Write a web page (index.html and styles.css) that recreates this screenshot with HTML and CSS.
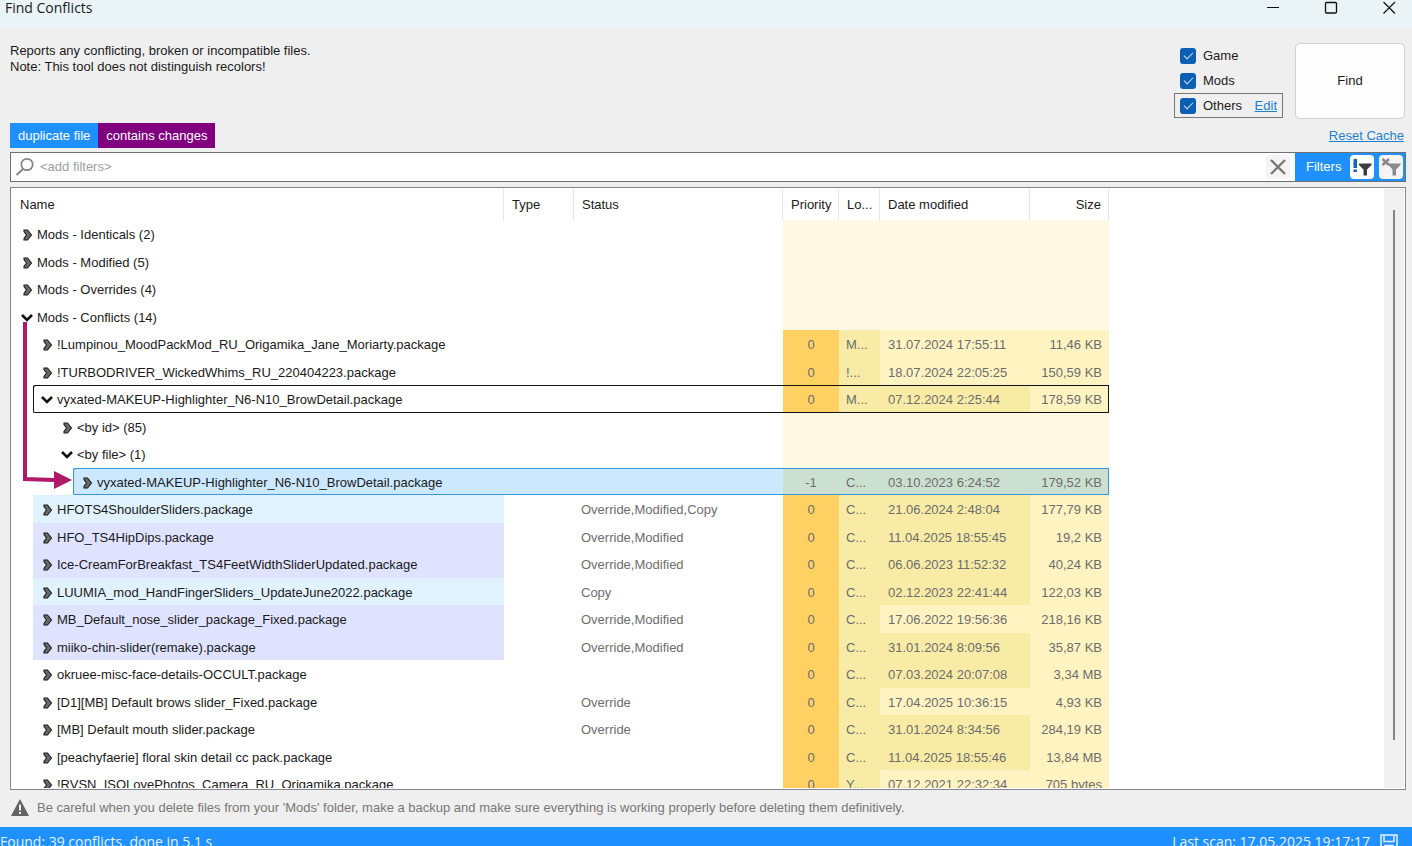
FILE: index.html
```html
<!DOCTYPE html>
<html lang="en">
<head>
<meta charset="utf-8">
<title>Find Conflicts</title>
<link rel="stylesheet" href="styles.css">
</head>
<body>
<svg class="sprite" aria-hidden="true">
  <symbol id="closed" viewBox="0 0 12 12"><path d="M3 1H6.500L10.500 6L6.500 11H3V9.500L5.500 6L3 2.500Z" fill="#6a6a6a" stroke="#1c1c1c" stroke-width="1.100"/></symbol>
  <symbol id="open" viewBox="0 0 12 12"><path d="M1 3L6 8L11 3" fill="none" stroke="#111" stroke-width="2.600"/></symbol>
</svg>
<header class="titlebar">
  <h1 class="title">Find Conflicts</h1>
  <div class="window-buttons">
    <button class="window-button" aria-label="Minimize"><svg width="14" height="14" viewBox="0 0 14 14"><path d="M1 6.500H13" stroke="#111"/></svg></button>
    <button class="window-button" aria-label="Maximize"><svg width="14" height="14" viewBox="0 0 14 14"><rect x="1.500" y="1.500" width="11" height="10.500" rx="1" fill="none" stroke="#111" stroke-width="1.300"/></svg></button>
    <button class="window-button" aria-label="Close"><svg width="14" height="14" viewBox="0 0 14 14"><path d="M1.500 1L13 12.500M13 1L1.500 12.500" stroke="#111" stroke-width="1.200"/></svg></button>
  </div>
</header>
<main class="content">
  <section class="top">
    <p class="intro">Reports any conflicting, broken or incompatible files.<br>Note: This tool does not distinguish recolors!</p>
    <div class="scopes">
      <div class="scope"><label class="scope-label"><input class="check" type="checkbox" checked>Game</label></div>
      <div class="scope"><label class="scope-label"><input class="check" type="checkbox" checked>Mods</label></div>
      <div class="scope scope-framed"><label class="scope-label"><input class="check" type="checkbox" checked>Others</label><a class="link" href="#">Edit</a></div>
    </div>
    <button class="find">Find</button>
  </section>
  <section class="tags">
    <span class="tag tag-blue">duplicate file</span><span class="tag tag-purple">contains changes</span>
    <a class="link reset" href="#">Reset Cache</a>
  </section>
  <section class="filter">
    <svg class="search-icon" width="20" height="20" viewBox="0 0 20 20"><circle cx="12" cy="7.500" r="5.700" fill="none" stroke="#858585" stroke-width="1.700"/><path d="M8 12L1.500 18" stroke="#858585" stroke-width="2"/></svg>
    <input class="filter-input" type="text" placeholder="&lt;add filters&gt;" aria-label="Filters">
    <button class="tool" aria-label="Clear"><svg width="24" height="24" viewBox="0 0 24 24"><path d="M5 5L19 19M19 5L5 19" stroke="#777" stroke-width="2.400"/></svg></button>
    <div class="filter-panel">
      <span class="filter-label">Filters</span>
      <button class="tool tool-on" aria-label="Apply filters"><svg width="24" height="24" viewBox="0 0 24 24"><path d="M3.500 4H7V13H3.500ZM3.500 14.500H7V17H3.500Z" fill="#1464b8"/><path d="M9 8.500H21.500V10L17 14.500V20.500H13.500V14.500L9 10Z" fill="#3c3c3c"/></svg></button>
      <button class="tool" aria-label="Remove filters"><svg width="24" height="24" viewBox="0 0 24 24"><path d="M3.500 4L10 10M10 4L3.500 10" stroke="#888" stroke-width="2.400"/><path d="M9.500 8.500H21.500V10L17 14.500V20.500H13.500V14.500L9.500 10Z" fill="#8a8a8a"/></svg></button>
    </div>
  </section>
  <section class="list">
    <div class="viewport">
      <table class="grid">
        <colgroup><col class="c-name"><col class="c-type"><col class="c-status"><col class="c-priority"><col class="c-location"><col class="c-date"><col class="c-size"></colgroup>
        <thead><tr><th>Name</th><th>Type</th><th>Status</th><th>Priority</th><th>Lo...</th><th>Date modified</th><th class="num">Size</th></tr></thead>
        <tbody>
          <tr><td><div class="node l0"><svg class="mark"><use href="#closed"/></svg>Mods - Identicals (2)</div></td><td></td><td></td><td class="pale"></td><td class="pale"></td><td class="pale"></td><td class="pale"></td></tr>
          <tr><td><div class="node l0"><svg class="mark"><use href="#closed"/></svg>Mods - Modified (5)</div></td><td></td><td></td><td class="pale"></td><td class="pale"></td><td class="pale"></td><td class="pale"></td></tr>
          <tr><td><div class="node l0"><svg class="mark"><use href="#closed"/></svg>Mods - Overrides (4)</div></td><td></td><td></td><td class="pale"></td><td class="pale"></td><td class="pale"></td><td class="pale"></td></tr>
          <tr><td><div class="node l0"><svg class="mark"><use href="#open"/></svg>Mods - Conflicts (14)</div></td><td></td><td></td><td class="pale"></td><td class="pale"></td><td class="pale"></td><td class="pale"></td></tr>
          <tr><td><div class="node l1"><svg class="mark"><use href="#closed"/></svg>!Lumpinou_MoodPackMod_RU_Origamika_Jane_Moriarty.package</div></td><td></td><td></td><td class="gold">0</td><td class="sand">M...</td><td class="cream">31.07.2024 17:55:11</td><td class="cream num">11,46 KB</td></tr>
          <tr><td><div class="node l1"><svg class="mark"><use href="#closed"/></svg>!TURBODRIVER_WickedWhims_RU_220404223.package</div></td><td></td><td></td><td class="gold">0</td><td class="sand">!...</td><td class="cream">18.07.2024 22:05:25</td><td class="cream num">150,59 KB</td></tr>
          <tr class="boxed"><td><div class="node l1"><svg class="mark"><use href="#open"/></svg>vyxated-MAKEUP-Highlighter_N6-N10_BrowDetail.package</div></td><td></td><td></td><td class="gold">0</td><td class="sand">M...</td><td class="sand">07.12.2024 2:25:44</td><td class="cream num">178,59 KB</td></tr>
          <tr><td><div class="node l2"><svg class="mark"><use href="#closed"/></svg>&lt;by id&gt; (85)</div></td><td></td><td></td><td class="pale"></td><td class="pale"></td><td class="pale"></td><td class="pale"></td></tr>
          <tr><td><div class="node l2"><svg class="mark"><use href="#open"/></svg>&lt;by file&gt; (1)</div></td><td></td><td></td><td class="pale"></td><td class="pale"></td><td class="pale"></td><td class="pale"></td></tr>
          <tr class="selected"><td><div class="node l3"><svg class="mark"><use href="#closed"/></svg>vyxated-MAKEUP-Highlighter_N6-N10_BrowDetail.package</div></td><td></td><td></td><td class="gold">-1</td><td class="sand">C...</td><td class="sand">03.10.2023 6:24:52</td><td class="cream num">179,52 KB</td></tr>
          <tr><td><div class="node l1 blue"><svg class="mark"><use href="#closed"/></svg>HFOTS4ShoulderSliders.package</div></td><td></td><td>Override,Modified,Copy</td><td class="gold">0</td><td class="sand">C...</td><td class="sand">21.06.2024 2:48:04</td><td class="cream num">177,79 KB</td></tr>
          <tr><td><div class="node l1 violet"><svg class="mark"><use href="#closed"/></svg>HFO_TS4HipDips.package</div></td><td></td><td>Override,Modified</td><td class="gold">0</td><td class="sand">C...</td><td class="sand">11.04.2025 18:55:45</td><td class="cream num">19,2 KB</td></tr>
          <tr><td><div class="node l1 violet"><svg class="mark"><use href="#closed"/></svg>Ice-CreamForBreakfast_TS4FeetWidthSliderUpdated.package</div></td><td></td><td>Override,Modified</td><td class="gold">0</td><td class="sand">C...</td><td class="sand">06.06.2023 11:52:32</td><td class="cream num">40,24 KB</td></tr>
          <tr><td><div class="node l1 blue"><svg class="mark"><use href="#closed"/></svg>LUUMIA_mod_HandFingerSliders_UpdateJune2022.package</div></td><td></td><td>Copy</td><td class="gold">0</td><td class="sand">C...</td><td class="sand">02.12.2023 22:41:44</td><td class="cream num">122,03 KB</td></tr>
          <tr><td><div class="node l1 violet"><svg class="mark"><use href="#closed"/></svg>MB_Default_nose_slider_package_Fixed.package</div></td><td></td><td>Override,Modified</td><td class="gold">0</td><td class="sand">C...</td><td class="cream">17.06.2022 19:56:36</td><td class="cream num">218,16 KB</td></tr>
          <tr><td><div class="node l1 violet"><svg class="mark"><use href="#closed"/></svg>miiko-chin-slider(remake).package</div></td><td></td><td>Override,Modified</td><td class="gold">0</td><td class="sand">C...</td><td class="sand">31.01.2024 8:09:56</td><td class="cream num">35,87 KB</td></tr>
          <tr><td><div class="node l1"><svg class="mark"><use href="#closed"/></svg>okruee-misc-face-details-OCCULT.package</div></td><td></td><td></td><td class="gold">0</td><td class="sand">C...</td><td class="sand">07.03.2024 20:07:08</td><td class="cream num">3,34 MB</td></tr>
          <tr><td><div class="node l1"><svg class="mark"><use href="#closed"/></svg>[D1][MB] Default brows slider_Fixed.package</div></td><td></td><td>Override</td><td class="gold">0</td><td class="sand">C...</td><td class="cream">17.04.2025 10:36:15</td><td class="cream num">4,93 KB</td></tr>
          <tr><td><div class="node l1"><svg class="mark"><use href="#closed"/></svg>[MB] Default mouth slider.package</div></td><td></td><td>Override</td><td class="gold">0</td><td class="sand">C...</td><td class="sand">31.01.2024 8:34:56</td><td class="cream num">284,19 KB</td></tr>
          <tr><td><div class="node l1"><svg class="mark"><use href="#closed"/></svg>[peachyfaerie] floral skin detail cc pack.package</div></td><td></td><td></td><td class="gold">0</td><td class="sand">C...</td><td class="sand">11.04.2025 18:55:46</td><td class="cream num">13,84 MB</td></tr>
          <tr><td><div class="node l1"><svg class="mark"><use href="#closed"/></svg>!RVSN_ISOLovePhotos_Camera_RU_Origamika.package</div></td><td></td><td></td><td class="gold">0</td><td class="sand">Y...</td><td class="cream">07.12.2021 22:32:34</td><td class="cream num">705 bytes</td></tr>
        </tbody>
      </table>
      <svg class="pointer" width="52" height="180" viewBox="0 0 52 180" aria-hidden="true"><path d="M5 0V157L34 158" fill="none" stroke="#b01868" stroke-width="4"/><path d="M34 149L52 158L34 167Z" fill="#b01868"/></svg>
    </div>
    <div class="scrollbar"><div class="thumb"></div></div>
  </section>
  <p class="warning"><svg width="18" height="17" viewBox="0 0 18 17"><path d="M9 0L18 17H0Z" fill="#636363"/><path d="M9 5.500V11.500M9 13V15" stroke="#efefef" stroke-width="2"/></svg>Be careful when you delete files from your 'Mods' folder, make a backup and make sure everything is working properly before deleting them definitively.</p>
</main>
<footer class="status">
  <span>Found: 39 conflicts, done in 5.1 s</span>
  <span class="scan">Last scan: 17.05.2025 19:17:17</span>
  <svg class="save" width="18" height="18" viewBox="0 0 18 18"><path d="M1 1H17V17H1ZM4 1V7.500H14V1M5 17V11.500H13V17" fill="none" stroke="#e4f2ff" stroke-width="1.500"/></svg>
</footer>
</body>
</html>
```

FILE: styles.css
```css
* { box-sizing: border-box; }
body {
  margin: 0;
  height: 100vh;
  display: flex;
  flex-direction: column;
  overflow: hidden;
  background: #efefef;
  color: #1a1a1a;
  font: 13px/16px "Liberation Sans", Arial, sans-serif;
}
button { font: inherit; color: inherit; padding: 0; }
.sprite { position: absolute; width: 0; height: 0; }

.titlebar {
  flex: none;
  height: 27px;
  display: flex;
  justify-content: space-between;
  background: #eaf4f7;
  font-family: "Open Sans", "Noto Sans", sans-serif;
}
.title { margin: 0; padding-left: 5px; font-size: 14px; line-height: 16px; font-weight: 400; }
.window-buttons { display: flex; gap: 12px; }
.window-button { width: 46px; height: 16px; border: 0; background: none; display: grid; place-items: center; }

.content { flex: 1; min-height: 0; display: flex; flex-direction: column; padding: 16px 6px 0 10px; }
.top { display: flex; align-items: flex-start; gap: 12px; height: 80px; padding-right: 1px; }
.intro { margin: 0; flex: 1; }
.scopes { display: grid; width: 109px; }
.scope { display: flex; align-items: center; justify-content: space-between; height: 25px; padding: 0 5px; border: 1px solid transparent; }
.scope-framed { border-color: #777; }
.scope-label { display: flex; align-items: center; gap: 7px; }
.check {
  appearance: none;
  margin: 0;
  width: 16px;
  height: 16px;
  border-radius: 3px;
  background: #0a5fb4;
  display: grid;
  place-items: center;
}
.check:checked::before { content: ""; width: 8px; height: 4px; border: solid #cfe4f8; border-width: 0 0 1px 1px; transform: translateY(-1px) rotate(-45deg); }
.link { color: #1b7fd0; text-decoration: underline; }
.find { width: 110px; height: 76px; background: #fdfdfd; border: 1px solid #d0d0d0; border-radius: 5px; }

.tags { display: flex; align-items: center; height: 25px; }
.tag { height: 25px; line-height: 25px; padding: 0 8px; color: #fff; }
.tag-blue { background: #1e90ff; }
.tag-purple { background: #800080; }
.reset { margin-left: auto; margin-right: 2px; }

.filter { display: flex; align-items: center; height: 30px; margin-top: 4px; border: 1px solid #707070; background: #fff; }
.search-icon { flex: none; margin-left: 4px; }
.filter-input { flex: 1; min-width: 0; border: 0; outline: 0; padding: 0 5px; font: inherit; background: none; }
.filter-input::placeholder { color: #a0a0a0; opacity: 1; }
.tool { width: 24px; height: 24px; border: 0; border-radius: 4px; background: #f4f4f4; }
.tool svg { display: block; }
.tool-on { background: #fff; }
.filter-panel { display: flex; align-items: center; gap: 5px; width: 110px; height: 28px; margin-left: 5px; padding: 0 2px 0 11px; background: #1e90ff; color: #fff; }
.filter-label { flex: 1; }

.list { flex: 1; min-height: 0; display: flex; margin-top: 5px; border: 1px solid #83868f; background: #fff; padding: 1px; }
.viewport { position: relative; flex: 1; min-width: 0; overflow: hidden; }
.grid { border-collapse: separate; border-spacing: 0; table-layout: fixed; width: 1097px; }
.c-name { width: 492px; }
.c-type { width: 70px; }
.c-status { width: 209px; }
.c-priority { width: 56px; }
.c-location { width: 41px; }
.c-date { width: 150px; }
.c-size { width: 79px; }
.grid th { height: 31px; padding: 1px 8px 0; text-align: left; font-weight: 400; border-right: 1px solid #e5e5e5; white-space: nowrap; }
.grid td { height: 28px; padding: 2px 8px 0; color: #6d6d6d; white-space: nowrap; }
.grid tbody tr:nth-child(even) td { height: 27px; }
.grid .num { text-align: right; padding-right: 7px; }
.grid td:first-child { padding: 0; color: #1a1a1a; }
.grid td:nth-child(3), .grid td:nth-child(5) { padding-left: 7px; }
.node { display: flex; align-items: center; gap: 4px; height: 100%; padding-top: 2px; }
.mark { width: 12px; height: 12px; flex: none; }
.l0 { margin-left: 9px; }
.l1 { margin-left: 21px; padding-left: 8px; }
.l2 { margin-left: 49px; }
.l3 { margin-left: 61px; padding-left: 8px; }
.blue { background: #e1f2ff; }
.violet { background: #e0e3ff; }
.pale { background: #fff8e2; }
.grid .gold { background: #ffd163; text-align: center; }
.sand { background: #f8eba6; }
.cream { background: #fff3c2; }
.boxed { --edge: #111; }
.selected { --edge: #3b97dc; }
.boxed td:not(:first-child), .selected td:not(:first-child) { box-shadow: inset 0 1px var(--edge), inset 0 -1px var(--edge); }
.boxed .node, .selected .node { box-shadow: inset 1px 1px var(--edge), inset 0 -1px var(--edge); border-radius: 2px 0 0 2px; }
.grid .boxed td:last-child, .grid .selected td:last-child { box-shadow: inset -1px 1px var(--edge), inset 0 -1px var(--edge); }
.selected .node, .selected td:not(:first-child) { background: #cce8ff; }
.grid .selected td:nth-child(n+4) { background: #cce0d2; }
.pointer { position: absolute; left: 8px; top: 133px; }
.scrollbar { width: 20px; background: #f0f0f0; }
.thumb { width: 2px; height: 530px; margin: 21px 0 0 9px; background: #858585; }

.warning { margin: 0; height: 37px; display: flex; align-items: center; gap: 8px; padding: 0 0 2px 1px; color: #777; }

.status { flex: none; height: 19px; display: flex; align-items: flex-start; gap: 10px; padding-right: 14px; overflow: hidden; background: #1e90ff; color: #e4f2ff; font: 14px/30px "Open Sans", "Noto Sans", sans-serif; }
.scan { margin-left: auto; }
.save { flex: none; margin-top: 7px; }
```
